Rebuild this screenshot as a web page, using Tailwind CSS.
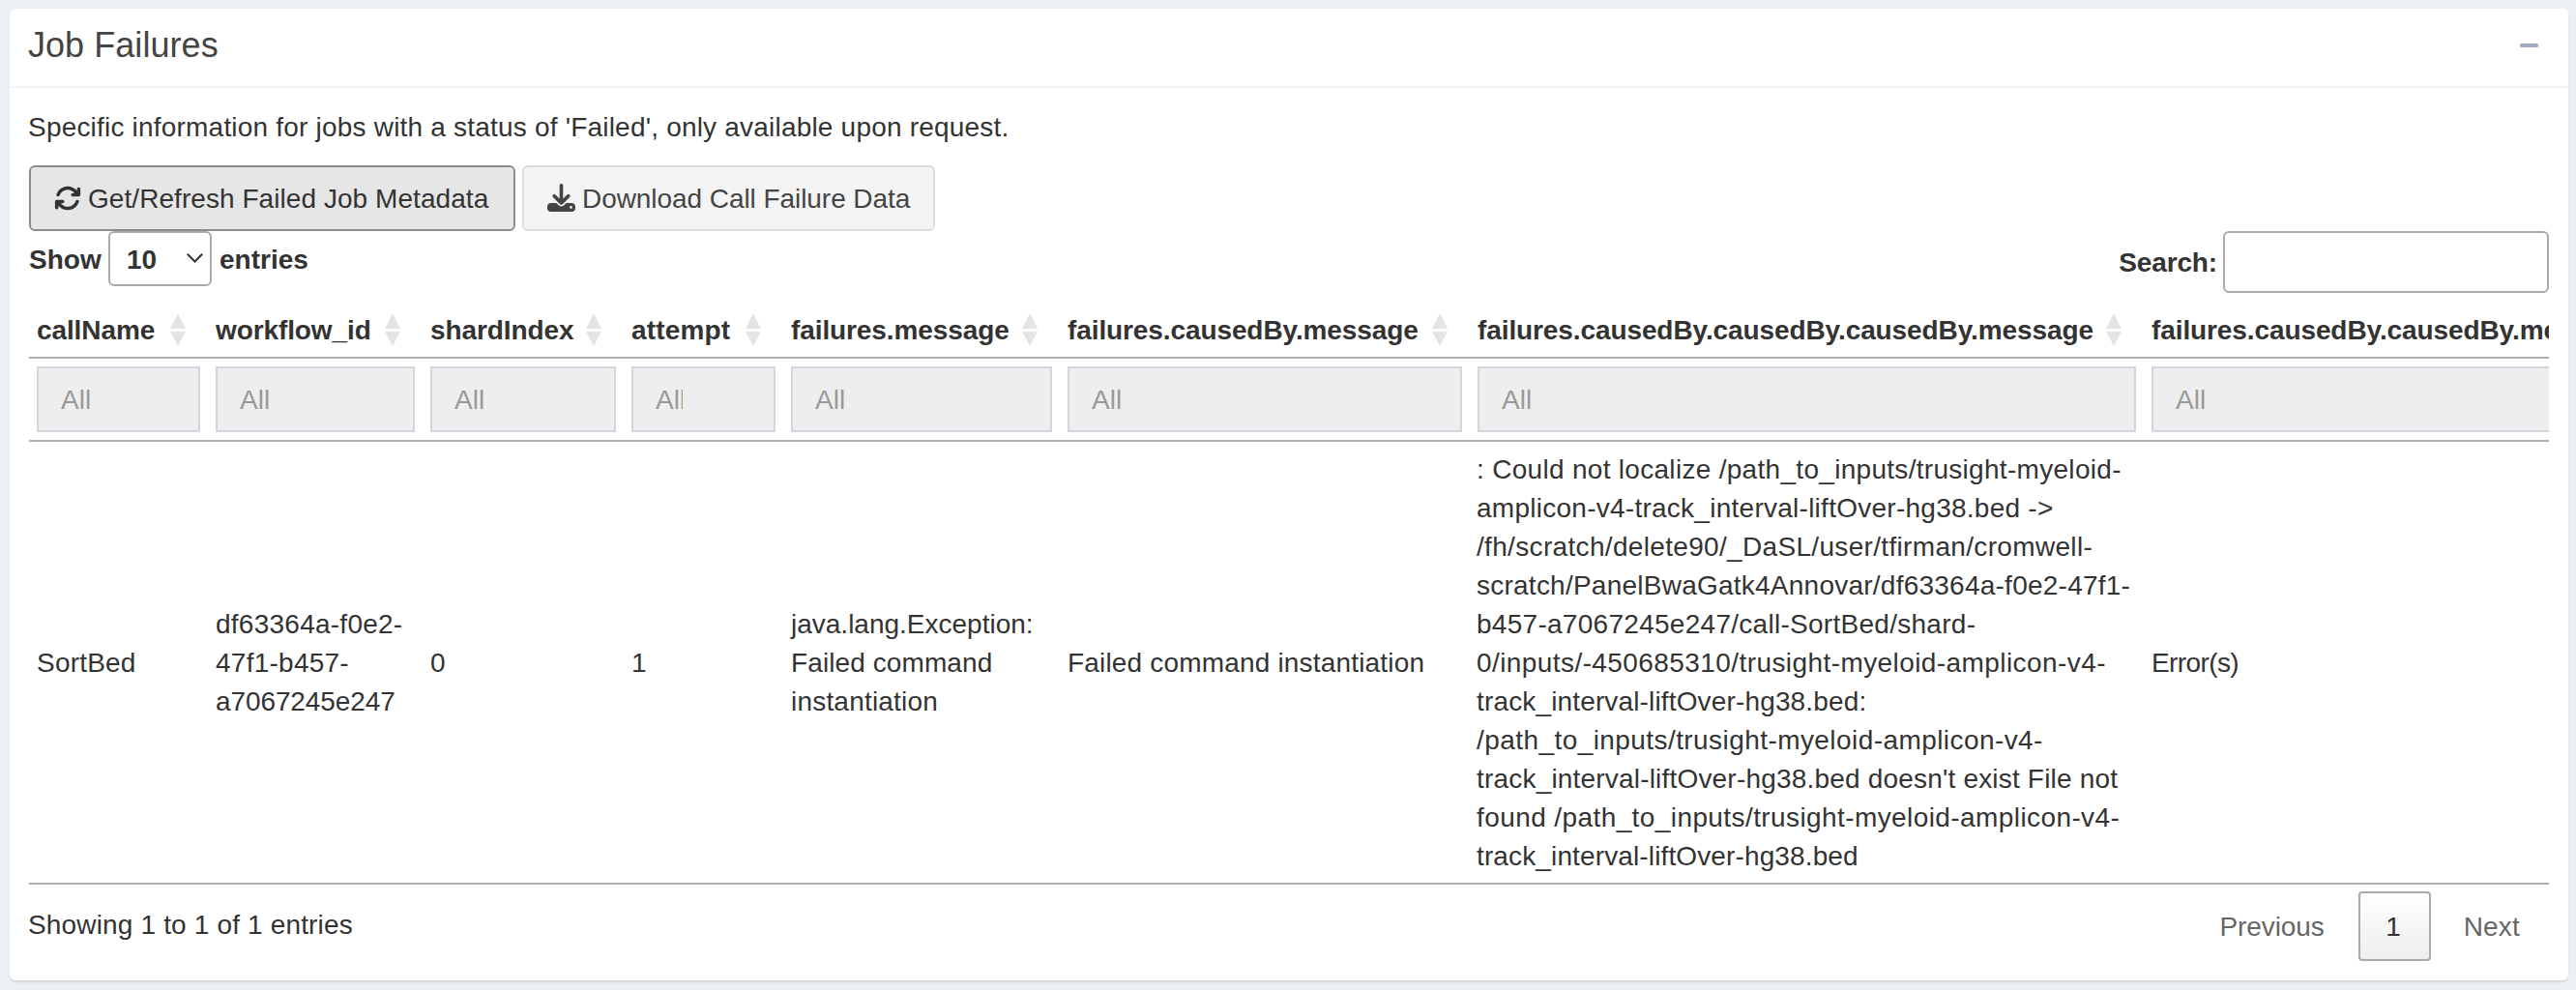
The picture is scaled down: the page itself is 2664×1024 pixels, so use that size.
<!DOCTYPE html>
<html lang="en">
<head>
<meta charset="utf-8">
<title>Job Failures</title>
<script src="https://cdn.jsdelivr.net/npm/@tailwindcss/browser@4"></script>
</head>
<body class="bg-[#ecf0f5] w-[2664px] h-[1024px] overflow-hidden pl-[10px] pr-2 pt-[9px] font-['Liberation_Sans',Arial,sans-serif] text-[28px] leading-[40px] text-[#333]">
<svg class="hidden">
  <symbol id="sort" viewBox="0 0 16 34"><path d="M8 0L16 16H0zM0 19H16L8 34z" fill="#e4e4e4"/></symbol>
</svg>
<section class="h-[1005px] bg-white rounded-[6px] shadow-[0_2px_2px_rgba(0,0,0,0.1)]">
  <header class="h-[82px] border-b-2 border-[#f4f4f4] flex items-start justify-between pl-[19px] pr-[31px] pt-[18px]">
    <h3 class="text-[36px] leading-[40px] text-[#444] tracking-[0.05px]">Job Failures</h3>
    <svg class="w-[19px] h-1 mt-[18px]" viewBox="0 0 19 4"><rect width="19" height="4" rx="1.5" fill="#a3aabd"/></svg>
  </header>
  <div class="px-5 pt-[21px]">
    <p class="-ml-px whitespace-nowrap tracking-[0.2px]">Specific information for jobs with a status of 'Failed', only available upon request.</p>
    <div class="flex mt-[19px] gap-[7px]">
      <button class="w-[503px] h-[68px] border-2 border-[#8c8c8c] bg-[#e6e6e6] rounded-[6px] flex items-center pl-6 whitespace-nowrap tracking-[0.06px]">
        <svg class="w-7 h-7 mr-[7px] shrink-0 -mt-px" viewBox="0 0 512 512" fill="#333"><path d="M105.1 202.600c7.700-21.800 20.200-42.300 37.800-59.800c62.500-62.500 163.800-62.500 226.300 0L386.300 160H352c-17.700 0-32 14.300-32 32s14.300 32 32 32H463.500c0 0 0 0 0 0h.4c17.700 0 32-14.300 32-32V80c0-17.700-14.300-32-32-32s-32 14.300-32 32v35.200L414.400 97.600c-87.500-87.500-229.300-87.500-316.800 0C73.200 122 55.600 150.700 44.800 181.400c-5.900 16.700 2.900 34.900 19.500 40.800s34.900-2.900 40.800-19.500zM39 289.300c-5 1.500-9.800 4.200-13.700 8.200c-4 4-6.700 8.800-8.100 14c-.3 1.200-.6 2.500-.8 3.800c-.3 1.700-.4 3.400-.4 5.100V432c0 17.700 14.300 32 32 32s32-14.300 32-32V396.900l17.600 17.500c87.500 87.400 229.300 87.400 316.700 0c24.400-24.400 42.100-53.100 52.900-83.700c5.900-16.700-2.900-34.900-19.500-40.800s-34.900 2.900-40.800 19.500c-7.700 21.800-20.200 42.300-37.800 59.800c-62.500 62.500-163.800 62.500-226.300 0l-.1-.1L125.600 352H160c17.700 0 32-14.300 32-32s-14.300-32-32-32H48.400c-1.600 0-3.200 .1-4.800 .3s-3.100 .5-4.600 1z"/></svg>
        <span class="mt-0.5">Get/Refresh Failed Job Metadata</span>
      </button>
      <button class="w-[427px] h-[68px] border-2 border-[#ddd] bg-[#f4f4f4] text-[#444] rounded-[6px] flex items-center pl-6 whitespace-nowrap tracking-[-0.06px]">
        <svg class="w-[29px] h-[29px] mr-[7px] shrink-0 -mt-px" viewBox="0 0 512 512" fill="#444"><path d="M288 32c0-17.700-14.300-32-32-32s-32 14.300-32 32V274.700l-73.400-73.400c-12.500-12.500-32.800-12.500-45.300 0s-12.500 32.800 0 45.300l128 128c12.500 12.500 32.800 12.500 45.300 0l128-128c12.500-12.500 12.500-32.800 0-45.300s-32.800-12.500-45.300 0L288 274.700V32zM64 352c-35.300 0-64 28.700-64 64v32c0 35.300 28.700 64 64 64H448c35.300 0 64-28.700 64-64V416c0-35.300-28.700-64-64-64H346.500l-45.300 45.300c-25 25-65.500 25-90.500 0L165.500 352H64zm368 56a24 24 0 1 1 0 48 24 24 0 1 1 0-48z"/></svg>
        <span class="mt-0.5">Download Call Failure Data</span>
      </button>
    </div>
    <div class="flex justify-between h-[77px] font-bold">
      <div class="flex items-start">
        <span class="w-[82px] mt-[10px]">Show</span>
        <div class="w-[107px] h-[57px] border-2 border-[#aaa] rounded-[6px] flex items-center justify-between pl-[17px] pr-[7px]">
          <span class="mt-[3px]">10</span>
          <svg class="w-[17px] h-[10px] -mt-0.5" viewBox="0 0 17 10" fill="none" stroke="#333" stroke-width="2"><path d="M.8.8L8.500 8.500L16.200.8"/></svg>
        </div>
        <span class="ml-2 mt-[10px]">entries</span>
      </div>
      <div class="flex items-start">
        <span class="mr-[6px] mt-[13px] tracking-[-0.15px]">Search:</span>
        <div class="w-[337px] h-16 border-2 border-[#aaa] rounded-[6px]"></div>
      </div>
    </div>
    <div class="w-[2606px] overflow-hidden border-b-2 border-[#b0b0b0]">
      <div class="w-[2800px] grid grid-cols-[185px_222px_208px_165px_286px_424px_697px_613px] whitespace-nowrap">
        <div class="col-span-8 grid grid-cols-subgrid h-[55px] border-b-2 border-[#b0b0b0] font-bold tracking-[-0.1px]">
          <div class="flex justify-between pl-2 pr-[23px] pt-[6px]">callName<svg class="w-4 h-[34px] mt-0.5"><use href="#sort"/></svg></div>
          <div class="flex justify-between pl-2 pr-[23px] pt-[6px]">workflow_id<svg class="w-4 h-[34px] mt-0.5"><use href="#sort"/></svg></div>
          <div class="flex justify-between pl-2 pr-[23px] pt-[6px]">shardIndex<svg class="w-4 h-[34px] mt-0.5"><use href="#sort"/></svg></div>
          <div class="flex justify-between pl-2 pr-[23px] pt-[6px] tracking-[0.15px]">attempt<svg class="w-4 h-[34px] mt-0.5"><use href="#sort"/></svg></div>
          <div class="flex justify-between pl-2 pr-[23px] pt-[6px]">failures.message<svg class="w-4 h-[34px] mt-0.5"><use href="#sort"/></svg></div>
          <div class="flex justify-between pl-2 pr-[23px] pt-[6px]">failures.causedBy.message<svg class="w-4 h-[34px] mt-0.5"><use href="#sort"/></svg></div>
          <div class="flex justify-between pl-2 pr-[23px] pt-[6px]">failures.causedBy.causedBy.causedBy.message<svg class="w-4 h-[34px] mt-0.5"><use href="#sort"/></svg></div>
          <div class="flex justify-between pl-2 pr-[23px] pt-[6px]">failures.causedBy.causedBy.message<svg class="w-4 h-[34px] mt-0.5"><use href="#sort"/></svg></div>
        </div>
        <div class="col-span-8 grid grid-cols-subgrid h-[86px] border-b-2 border-[#b0b0b0] py-2 text-[#999]">
          <div class="mx-2 h-[68px] border-2 border-[#d2d6de] bg-[#eee] pl-[23px] pt-[13px]">All</div>
          <div class="mx-2 h-[68px] border-2 border-[#d2d6de] bg-[#eee] pl-[23px] pt-[13px]">All</div>
          <div class="mx-2 h-[68px] border-2 border-[#d2d6de] bg-[#eee] pl-[23px] pt-[13px]">All</div>
          <div class="mx-2 h-[68px] border-2 border-[#d2d6de] bg-[#eee] pl-[23px] pt-[13px]"><div class="w-[28px] overflow-hidden">All</div></div>
          <div class="mx-2 h-[68px] border-2 border-[#d2d6de] bg-[#eee] pl-[23px] pt-[13px]">All</div>
          <div class="mx-2 h-[68px] border-2 border-[#d2d6de] bg-[#eee] pl-[23px] pt-[13px]">All</div>
          <div class="mx-2 h-[68px] border-2 border-[#d2d6de] bg-[#eee] pl-[23px] pt-[13px]">All</div>
          <div class="mx-2 h-[68px] border-2 border-[#d2d6de] bg-[#eee] pl-[23px] pt-[13px]">All</div>
        </div>
        <div class="col-span-8 grid grid-cols-subgrid h-[456px] items-center pt-0.5">
          <div class="px-2 tracking-[0.2px]">SortBed</div>
          <div class="px-2"><span class="tracking-[0.25px]">df63364a-f0e2-</span><br><span class="tracking-[0.25px]">47f1-b457-</span><br><span class="tracking-[-0.1px]">a7067245e247</span></div>
          <div class="px-2">0</div>
          <div class="px-2">1</div>
          <div class="px-2">java.lang.Exception:<br><span class="tracking-[0.1px]">Failed command</span><br><span class="tracking-[0.2px]">instantiation</span></div>
          <div class="px-2 tracking-[0.18px]">Failed command instantiation</div>
          <div class="pl-[7px]">
            <div class="tracking-[0.3px]">: Could not localize /path_to_inputs/trusight-myeloid-</div>
            <div class="tracking-[0.26px]">amplicon-v4-track_interval-liftOver-hg38.bed -&gt;</div>
            <div class="tracking-[0.33px]">/fh/scratch/delete90/_DaSL/user/tfirman/cromwell-</div>
            <div class="tracking-[0.24px]">scratch/PanelBwaGatk4Annovar/df63364a-f0e2-47f1-</div>
            <div class="tracking-[0.28px]">b457-a7067245e247/call-SortBed/shard-</div>
            <div class="tracking-[0.42px]">0/inputs/-450685310/trusight-myeloid-amplicon-v4-</div>
            <div class="tracking-[0.15px]">track_interval-liftOver-hg38.bed:</div>
            <div class="tracking-[0.43px]">/path_to_inputs/trusight-myeloid-amplicon-v4-</div>
            <div class="tracking-[0.19px]">track_interval-liftOver-hg38.bed doesn't exist File not</div>
            <div class="tracking-[0.41px]">found /path_to_inputs/trusight-myeloid-amplicon-v4-</div>
            <div class="tracking-[0.13px]">track_interval-liftOver-hg38.bed</div>
          </div>
          <div class="px-2 tracking-[-0.6px]">Error(s)</div>
        </div>
      </div>
    </div>
    <div class="flex justify-between items-start pt-[7px]">
      <span class="mt-[15px] -ml-px tracking-[0.16px]">Showing 1 to 1 of 1 entries</span>
      <nav class="flex items-center h-[72px] text-[#666] pr-[30px]">
        <span class="mt-px tracking-[-0.1px]">Previous</span>
        <span class="ml-[35px] w-[75px] h-[72px] border-2 border-[#aaa] rounded-[4px] bg-linear-to-b from-white to-[#eee] text-[#333] flex items-center justify-center pt-px pr-0.5">1</span>
        <span class="ml-[34px] mt-px tracking-[0.2px]">Next</span>
      </nav>
    </div>
  </div>
</section>
</body>
</html>
